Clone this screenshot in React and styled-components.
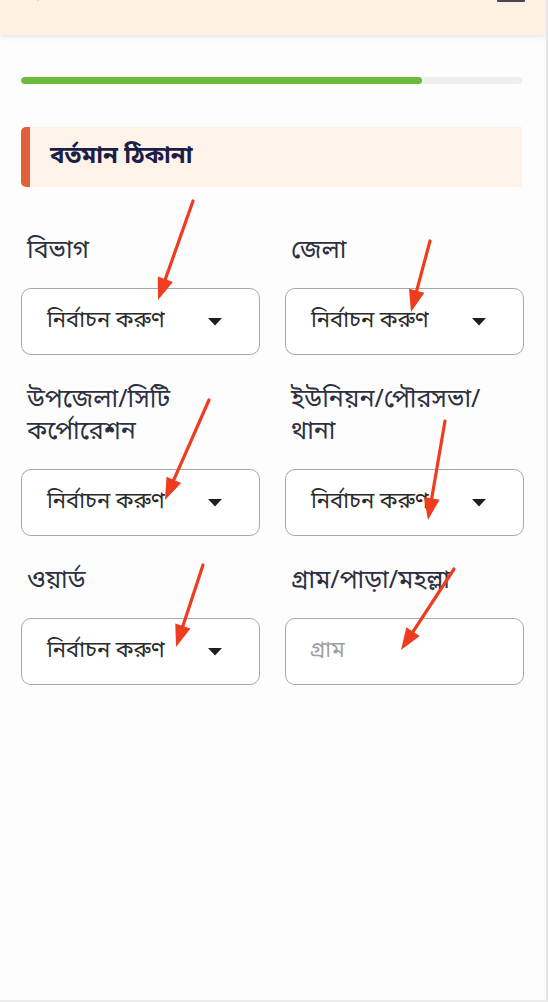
import React from 'react';
import styled, { createGlobalStyle } from 'styled-components';

const GlobalStyle = createGlobalStyle`
  html, body {
    margin: 0;
    padding: 0;
    background: #fdfdfd;
  }
  body {
    font-family: "Noto Sans Bengali", "Lohit Bengali", "Noto Sans", "Liberation Sans", sans-serif;
    color: #2f3340;
  }
  * {
    box-sizing: border-box;
  }
`;

const fields = [
  { label: 'বিভাগ', type: 'select' },
  { label: 'জেলা', type: 'select' },
  { label: 'উপজেলা/সিটি কর্পোরেশন', type: 'select' },
  { label: 'ইউনিয়ন/পৌরসভা/ থানা', type: 'select' },
  { label: 'ওয়ার্ড', type: 'select' },
  { label: 'গ্রাম/পাড়া/মহল্লা', type: 'input', placeholder: 'গ্রাম' },
];

// red annotation arrows drawn on top of the screenshot
const arrows = [
  [193, 201, 158, 300],
  [430, 241, 411, 312],
  [209, 400, 165, 500],
  [445, 421, 428, 520],
  [203, 565, 176, 647],
  [454, 569, 401, 650],
];

function Arrow({ x1, y1, x2, y2 }) {
  const dx = x2 - x1;
  const dy = y2 - y1;
  const len = Math.sqrt(dx * dx + dy * dy);
  const ux = dx / len;
  const uy = dy / len;
  const head = 22;
  const half = 8;
  const bx = x2 - ux * head;
  const by = y2 - uy * head;
  const nx = -uy;
  const ny = ux;
  const points = `${x2},${y2} ${bx + nx * half},${by + ny * half} ${bx - nx * half},${by - ny * half}`;
  return (
    <g>
      <line x1={x1} y1={y1} x2={bx + ux * 2} y2={by + uy * 2} stroke="#ef3b1f" strokeWidth="3.2" strokeLinecap="round" />
      <polygon points={points} fill="#ef3b1f" />
    </g>
  );
}

class App extends React.Component {
  render() {
    return (
      <Page>
        <GlobalStyle />
        <Header>
          <BackIcon width="24" height="24" viewBox="0 0 24 24">
            <path d="M19 12H5M12 19l-7-7 7-7" fill="none" stroke="#2a2540" strokeWidth="2.4" strokeLinecap="round" strokeLinejoin="round" />
          </BackIcon>
          <MenuIcon>
            <MenuLine />
            <MenuLine />
            <MenuLine />
          </MenuIcon>
        </Header>

        <Content>
          <Progress>
            <ProgressFill $value={80} />
          </Progress>

          <SectionTitle>বর্তমান ঠিকানা</SectionTitle>

          <FieldGrid>
            {fields.map((f, i) => (
              <Field key={i}>
                <Label>{f.label}</Label>
                {f.type === 'select' ? (
                  <SelectBox>
                    <SelectText>নির্বাচন করুণ</SelectText>
                    <Caret width="14" height="8" viewBox="0 0 14 8">
                      <path d="M0 0h14L7 7.5z" fill="#1f1f1f" />
                    </Caret>
                  </SelectBox>
                ) : (
                  <TextInput placeholder={f.placeholder} />
                )}
              </Field>
            ))}
          </FieldGrid>
        </Content>

        <Overlay width="548" height="1002" viewBox="0 0 548 1002">
          {arrows.map((a, i) => (
            <Arrow key={i} x1={a[0]} y1={a[1]} x2={a[2]} y2={a[3]} />
          ))}
        </Overlay>
      </Page>
    );
  }
}

const
  Page = styled.div`
    position: relative;
    width: 548px;
    height: 1002px;
    overflow: hidden;
    background: #fdfdfd;
    border-right: 2px solid #e6e6e6;
    border-bottom: 2px solid #ececec;
  `,
  Header = styled.div`
    height: 35px;
    background: #fef1e3;
    box-shadow: 0 2px 5px rgba(0, 0, 0, 0.1);
    display: flex;
    justify-content: space-between;
    align-items: flex-start;
    padding: 0 21px 0 26px;
    overflow: hidden;
  `,
  BackIcon = styled.svg`
    margin-top: -20px;
  `,
  MenuIcon = styled.div`
    margin-top: -19px;
    width: 28px;
    display: flex;
    flex-direction: column;
    gap: 6px;
  `,
  MenuLine = styled.div`
    height: 3px;
    background: #4a4456;
    border-radius: 1px;
  `,
  Content = styled.div`
    padding: 42px 24px 0 21px;
  `,
  Progress = styled.div`
    height: 7px;
    background: #efefef;
    border-radius: 4px;
    overflow: hidden;
  `,
  ProgressFill = styled.div`
    width: ${p => p.$value}%;
    height: 100%;
    background: #6cbb3c;
    border-radius: 4px;
  `,
  SectionTitle = styled.h2`
    margin: 43px 0 0 0;
    height: 60px;
    display: flex;
    align-items: center;
    padding-left: 20px;
    background: #fdf3e8;
    border-left: 9px solid #e2603a;
    border-radius: 5px 0 0 5px;
    font-size: 24px;
    font-weight: 700;
    color: #1c1e48;
  `,
  FieldGrid = styled.div`
    margin-top: 49px;
    display: grid;
    grid-template-columns: 239px 239px;
    column-gap: 25px;
    row-gap: 30px;
  `,
  Field = styled.div`
    display: flex;
    flex-direction: column;
    justify-content: flex-end;
  `,
  Label = styled.div`
    padding: 0 6px;
    font-size: 25px;
    line-height: 32px;
    color: #2c3040;
    margin-bottom: 20px;
  `,
  SelectBox = styled.div`
    height: 67px;
    border: 1.5px solid #a8a8a8;
    border-radius: 10px;
    background: #fff;
    display: flex;
    align-items: center;
    justify-content: space-between;
    padding: 0 37px 0 25px;
  `,
  SelectText = styled.span`
    font-size: 22px;
    color: #2b2b2b;
  `,
  Caret = styled.svg`
    display: block;
  `,
  TextInput = styled.input`
    height: 67px;
    border: 1.5px solid #a8a8a8;
    border-radius: 10px;
    background: #fff;
    padding: 0 24px;
    font-family: inherit;
    font-size: 22px;
    color: #2b2b2b;
    outline: none;
    &::placeholder {
      color: #a0a0a0;
    }
  `,
  Overlay = styled.svg`
    position: absolute;
    top: 0;
    left: 0;
    pointer-events: none;
  `;

export default App;
